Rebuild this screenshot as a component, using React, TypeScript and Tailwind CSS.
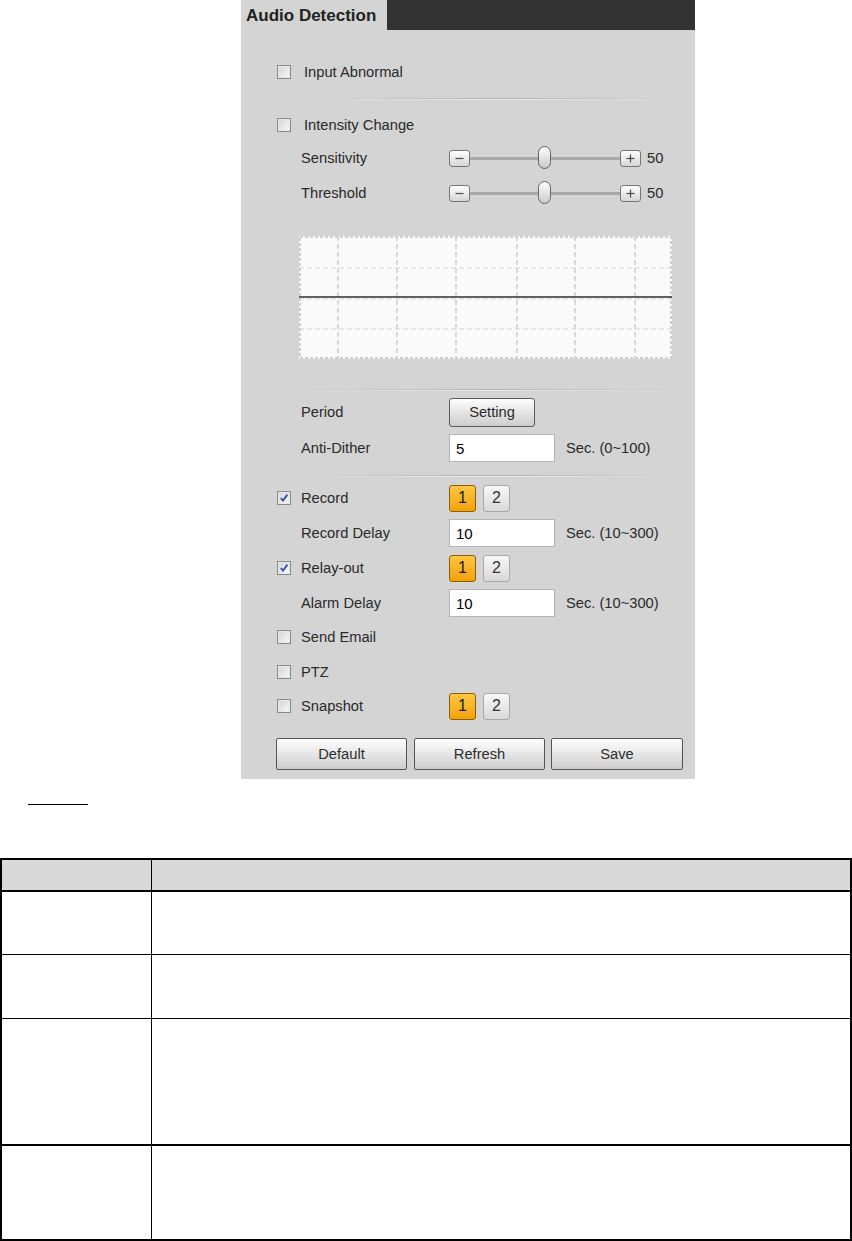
import React from "react";

const FONT = "font-['Liberation_Sans',Arial,Helvetica,sans-serif]";

function Check({ checked }: { checked?: boolean }) {
  return (
    <span className="w-[14px] h-[14px] shrink-0 border border-[#8a8a8a] bg-linear-to-br from-[#d2d2d2] to-[#fafafa] flex items-center justify-center shadow-[inset_0_0_0_1px_#e8e8e8]">
      {checked && (
        <svg width="10" height="10" viewBox="0 0 10 10">
          <path d="M1.8 5 L4 7.6 L8.4 1.6" stroke="#2f4fae" strokeWidth="1.8" fill="none" />
        </svg>
      )}
    </span>
  );
}

function PM({ plus }: { plus?: boolean }) {
  return (
    <span className="w-[21px] h-[17px] shrink-0 rounded-[3px] border border-[#767676] bg-linear-to-b from-[#ffffff] to-[#d6d6d6] flex items-center justify-center">
      <svg width="11" height="11" viewBox="0 0 11 11">
        <line x1="1.5" y1="5.5" x2="9.5" y2="5.5" stroke="#4a4a4a" strokeWidth="1.2" />
        {plus && <line x1="5.5" y1="1.5" x2="5.5" y2="9.5" stroke="#4a4a4a" strokeWidth="1.2" />}
      </svg>
    </span>
  );
}

function SliderRow({ label, h }: { label: string; h: string }) {
  return (
    <div className={`flex items-center ${h}`}>
      <div className="w-[208px] pl-[60px]">{label}</div>
      <div className="flex items-center">
        <PM />
        <div className="relative w-[150px] h-[3px] bg-[#a8a8a8]">
          <div className="absolute left-[68px] top-[-11px] w-[13px] h-[23px] rounded-full border border-[#646464] bg-linear-to-b from-[#ffffff] to-[#cacaca]" />
        </div>
        <PM plus />
        <span className="ml-[6px]">50</span>
      </div>
    </div>
  );
}

function NumBtns() {
  return (
    <div className="flex gap-[7px]">
      <span className="w-[27px] h-[27px] rounded-[3px] border border-[#8a5f0c] bg-linear-to-b from-[#ffc640] to-[#f4a100] flex items-center justify-center text-[16px] text-[#1a1a1a]">
        1
      </span>
      <span className="w-[27px] h-[27px] rounded-[3px] border border-[#a8a8a8] bg-linear-to-b from-[#f8f8f8] to-[#d8d8d8] flex items-center justify-center text-[16px] text-[#333]">
        2
      </span>
    </div>
  );
}

function Field({ value }: { value: string }) {
  return (
    <div className="w-[106px] h-[28px] bg-white border border-[#b4b4b4] pl-[6px] flex items-center text-[15px] text-black">
      {value}
    </div>
  );
}

function CheckRow({ label, checked, h, children }: { label: string; checked?: boolean; h: string; children?: React.ReactNode }) {
  return (
    <div className={`flex items-center ${h}`}>
      <div className="w-[208px] pl-[36px] flex items-center gap-[10px]">
        <Check checked={checked} />
        <span>{label}</span>
      </div>
      {children}
    </div>
  );
}

function LabelRow({ label, h, children }: { label: string; h: string; children?: React.ReactNode }) {
  return (
    <div className={`flex items-center ${h}`}>
      <div className="w-[208px] pl-[60px]">{label}</div>
      <div className="flex items-center">{children}</div>
    </div>
  );
}

function Sep({ cls }: { cls: string }) {
  return (
    <div className={cls}>
      <div className="h-px bg-linear-to-r from-[#d4d4d4] via-[#b3b3b3] to-[#d4d4d4]" />
      <div className="h-px bg-linear-to-r from-[#d4d4d4] via-[#ececec] to-[#d4d4d4]" />
    </div>
  );
}

function Chart() {
  const vx = [39, 98, 157, 218, 276, 336];
  const hy = [32, 63, 93];
  return (
    <svg width="373" height="123" viewBox="0 0 373 123" className="block">
      <rect x="0" y="0" width="373" height="123" fill="#fafafa" />
      <rect x="1" y="1" width="371" height="121" fill="none" stroke="#cfcfcf" strokeWidth="2" strokeDasharray="3 2" />
      {vx.map((x) => (
        <line key={x} x1={x} y1="0" x2={x} y2="123" stroke="#cdcdcd" strokeWidth="1.5" strokeDasharray="5 3" />
      ))}
      {hy.map((y) => (
        <line key={y} x1="0" y1={y} x2="373" y2={y} stroke="#d3d3d3" strokeWidth="1" strokeDasharray="5 3" />
      ))}
      <line x1="0" y1="61" x2="373" y2="61" stroke="#2e2e2e" strokeWidth="1.6" />
    </svg>
  );
}

function BigBtn({ label, cls }: { label: string; cls: string }) {
  return (
    <span className={`${cls} h-[32px] rounded-[2px] border border-[#555] bg-linear-to-b from-[#ffffff] to-[#cdcdcd] flex items-center justify-center text-[#2d2d2d]`}>
      {label}
    </span>
  );
}

export default function App() {
  return (
    <div className={`${FONT} bg-white w-[852px] min-h-[1241px]`}>
      <div className="ml-[241px] w-[454px] bg-[#d4d4d4] pb-[9px] text-[#2a2a2a] text-[14.7px] leading-none">
        <div className="flex h-[30px]">
          <div className="w-[146px] pl-[5px] flex items-center font-bold text-[17px] text-[#222]">Audio Detection</div>
          <div className="flex-1 bg-[#333333]" />
        </div>

        <div className="mt-[25px] flex items-center h-[34px] pl-[36px] gap-[13px]">
          <Check />
          <span>Input Abnormal</span>
        </div>
        <div className="h-[20px] flex items-center">
          <Sep cls="ml-[76px] w-[363px]" />
        </div>
        <div className="flex items-center h-[32px] pl-[36px] gap-[13px]">
          <Check />
          <span>Intensity Change</span>
        </div>
        <SliderRow label="Sensitivity" h="h-[34px]" />
        <SliderRow label="Threshold" h="h-[36px]" />

        <div className="mt-[25px] pl-[58px]">
          <Chart />
        </div>

        <Sep cls="mt-[30px] ml-[59px] w-[380px]" />

        <LabelRow label="Period" h="h-[43px]">
          <span className="w-[86px] h-[29px] rounded-[3px] border border-[#5a5a5a] bg-linear-to-b from-[#fdfdfd] to-[#cdcdcd] flex items-center justify-center">
            Setting
          </span>
        </LabelRow>
        <LabelRow label="Anti-Dither" h="h-[28px]">
          <Field value="5" />
          <span className="ml-[11px]">Sec. (0~100)</span>
        </LabelRow>

        <Sep cls="mt-[13px] ml-[59px] w-[380px]" />

        <div className="mt-[4px]" />
        <CheckRow label="Record" checked h="h-[34px]">
          <NumBtns />
        </CheckRow>
        <LabelRow label="Record Delay" h="h-[36px]">
          <Field value="10" />
          <span className="ml-[11px]">Sec. (10~300)</span>
        </LabelRow>
        <CheckRow label="Relay-out" checked h="h-[34px]">
          <NumBtns />
        </CheckRow>
        <LabelRow label="Alarm Delay" h="h-[36px]">
          <Field value="10" />
          <span className="ml-[11px]">Sec. (10~300)</span>
        </LabelRow>
        <CheckRow label="Send Email" h="h-[32px]" />
        <CheckRow label="PTZ" h="h-[38px]" />
        <CheckRow label="Snapshot" h="h-[30px]">
          <NumBtns />
        </CheckRow>

        <div className="mt-[17px] pl-[35px] flex">
          <BigBtn label="Default" cls="w-[131px]" />
          <BigBtn label="Refresh" cls="ml-[7px] w-[131px]" />
          <BigBtn label="Save" cls="ml-[6px] w-[132px]" />
        </div>
      </div>

      <div className="mt-[25px] ml-[28px] w-[60px] h-px bg-black" />

      <div className="mt-[53px] border-2 border-black">
        <div className="flex h-[30px] bg-[#d9d9d9] border-b-2 border-black box-content">
          <div className="w-[150px] border-r border-black" />
          <div className="flex-1" />
        </div>
        <div className="flex h-[62px] border-b border-black box-content">
          <div className="w-[150px] border-r border-black" />
          <div className="flex-1" />
        </div>
        <div className="flex h-[63px] border-b border-black box-content">
          <div className="w-[150px] border-r border-black" />
          <div className="flex-1" />
        </div>
        <div className="flex h-[125px] border-b-2 border-black box-content">
          <div className="w-[150px] border-r border-black" />
          <div className="flex-1" />
        </div>
        <div className="flex h-[93px]">
          <div className="w-[150px] border-r border-black" />
          <div className="flex-1" />
        </div>
      </div>
    </div>
  );
}
